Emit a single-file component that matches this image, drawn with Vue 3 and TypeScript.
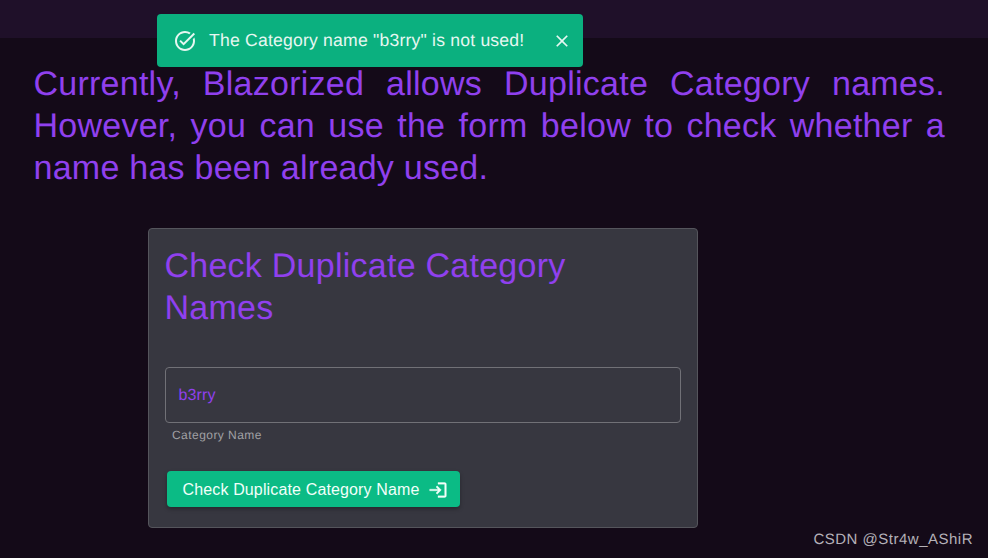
<script setup lang="ts">
const categoryName = 'b3rry'
</script>

<template>
  <div class="page">
    <header class="topbar"></header>

    <div class="toast">
      <svg class="toast-icon" viewBox="0 0 24 24" width="24" height="24">
        <path fill="currentColor" d="M22 5.18 10.59 16.6l-4.24-4.24 1.41-1.41 2.83 2.83 10-10L22 5.18zm-2.21 5.04c.13.57.21 1.17.21 1.78 0 4.42-3.58 8-8 8s-8-3.58-8-8 3.58-8 8-8c1.58 0 3.04.46 4.28 1.25l1.44-1.44A9.9 9.9 0 0 0 12 2C6.48 2 2 6.48 2 12s4.48 10 10 10 10-4.48 10-10c0-1.19-.22-2.33-.6-3.39l-1.61 1.61z" />
      </svg>
      <span class="toast-text">The Category name "{{ categoryName }}" is not used!</span>
      <svg class="toast-close" viewBox="0 0 24 24" width="20" height="20">
        <path fill="currentColor" d="M19 6.41 17.59 5 12 10.59 6.41 5 5 6.41 10.59 12 5 17.59 6.41 19 12 13.41 17.59 19 19 17.59 13.41 12z" />
      </svg>
    </div>

    <main class="content">
      <p class="intro">
        Currently, Blazorized allows Duplicate Category names. However, you can use the form below to check whether a name has been already used.
      </p>

      <section class="card">
        <h2 class="card-title">Check Duplicate Category Names</h2>

        <div class="field">
          <div class="field-box">{{ categoryName }}</div>
          <div class="field-help">Category Name</div>
        </div>

        <button class="check-btn" type="button">
          <span class="check-label">Check Duplicate Category Name</span>
          <svg class="check-icon" viewBox="0 0 24 24" width="20" height="20">
            <path fill="currentColor" d="M11 7 9.6 8.4l2.6 2.6H2v2h10.2l-2.6 2.6L11 17l5-5-5-5zm9 12h-8v2h8c1.1 0 2-.9 2-2V5c0-1.1-.9-2-2-2h-8v2h8v14z" />
          </svg>
        </button>
      </section>
    </main>

    <div class="watermark">CSDN @Str4w_AShiR</div>
  </div>
</template>

<style scoped>
.page {
  position: relative;
  width: 988px;
  height: 558px;
  overflow: hidden;
  background: #140a18;
  font-family: "Liberation Sans", Arial, sans-serif;
  text-rendering: geometricPrecision;
}

.topbar {
  height: 38px;
  background: #1f1029;
}

.toast {
  position: absolute;
  top: 14px;
  left: 157px;
  width: 426px;
  height: 53px;
  box-sizing: border-box;
  display: flex;
  align-items: center;
  padding: 0 11.5px 0 16px;
  background: #0bb07f;
  border-radius: 4px;
  color: #e6f7f1;
}

.toast-icon {
  flex: none;
  margin-top: 1px;
}

.toast-text {
  flex: 1;
  margin-left: 12px;
  margin-top: -1px;
  font-size: 17.6px;
  letter-spacing: 0.2px;
  white-space: nowrap;
}

.toast-close {
  flex: none;
  margin-top: 1px;
}

.content {
  padding: 25px 43px 0 33.5px;
}

.intro {
  margin: 0;
  font-size: 34px;
  line-height: 42px;
  text-align: justify;
  color: #9040ee;
  letter-spacing: 0.25px;
}

.card {
  width: 550px;
  height: 300px;
  box-sizing: border-box;
  margin: 39px 0 0 114.5px;
  padding: 16px 15.5px;
  background: #373740;
  border: 1px solid #55555c;
  border-radius: 4px;
}

.card-title {
  width: 440px;
  margin: 0;
  font-size: 34px;
  font-weight: 400;
  line-height: 42px;
  color: #9040ee;
  letter-spacing: 0.25px;
}

.field {
  margin-top: 38px;
  width: 516px;
}

.field-box {
  height: 56px;
  box-sizing: border-box;
  display: flex;
  align-items: center;
  padding: 1px 13px 0;
  border: 1px solid #717177;
  border-radius: 4px;
  font-size: 16px;
  letter-spacing: 0.15px;
  color: #9040ee;
}

.field-help {
  margin: 5px 0 0 7.5px;
  font-size: 12px;
  line-height: 15px;
  letter-spacing: 0.45px;
  color: #a0a0a4;
}

.check-btn {
  display: flex;
  align-items: center;
  gap: 8px;
  height: 36px;
  margin: 28px 0 0 2px;
  padding: 0 12px 0 16px;
  border: none;
  border-radius: 4px;
  background: #0bbb85;
  color: #f2fffa;
  font-family: "Liberation Sans", Arial, sans-serif;
  font-size: 16px;
  letter-spacing: 0.14px;
  box-shadow: 0 2px 4px rgba(0, 0, 0, 0.3);
}

.check-label {
  margin-top: 1px;
}

.check-icon {
  margin-top: 1px;
  stroke: currentColor;
  stroke-width: 0.4;
}

.watermark {
  position: absolute;
  right: 15px;
  bottom: 8px;
  font-size: 15px;
  line-height: 20px;
  letter-spacing: 0.5px;
  color: #b4b1b8;
}
</style>

<style>
body {
  margin: 0;
}
</style>
